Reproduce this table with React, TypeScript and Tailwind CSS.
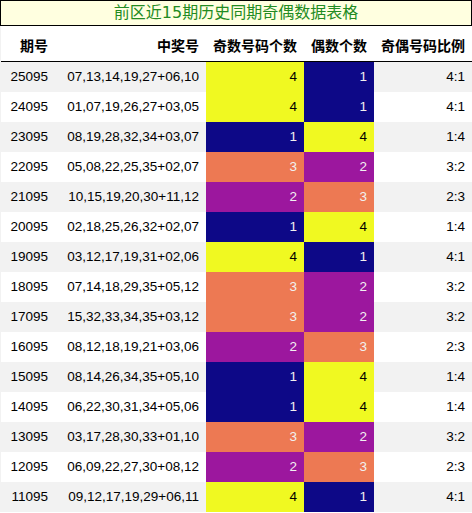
import React from "react";

type Row = [string, string, number, number, string];

const rows: Row[] = [
  ["25095", "07,13,14,19,27+06,10", 4, 1, "4:1"],
  ["24095", "01,07,19,26,27+03,05", 4, 1, "4:1"],
  ["23095", "08,19,28,32,34+03,07", 1, 4, "1:4"],
  ["22095", "05,08,22,25,35+02,07", 3, 2, "3:2"],
  ["21095", "10,15,19,20,30+11,12", 2, 3, "2:3"],
  ["20095", "02,18,25,26,32+02,07", 1, 4, "1:4"],
  ["19095", "03,12,17,19,31+02,06", 4, 1, "4:1"],
  ["18095", "07,14,18,29,35+05,12", 3, 2, "3:2"],
  ["17095", "15,32,33,34,35+03,12", 3, 2, "3:2"],
  ["16095", "08,12,18,19,21+03,06", 2, 3, "2:3"],
  ["15095", "08,14,26,34,35+05,10", 1, 4, "1:4"],
  ["14095", "06,22,30,31,34+05,06", 1, 4, "1:4"],
  ["13095", "03,17,28,30,33+01,10", 3, 2, "3:2"],
  ["12095", "06,09,22,27,30+08,12", 2, 3, "2:3"],
  ["11095", "09,12,17,19,29+06,11", 4, 1, "4:1"],
];

function colorCls(v: number): string {
  switch (v) {
    case 1:
      return "bg-[#0d0887] text-[#f1f1f1]";
    case 2:
      return "bg-[#9c179e] text-[#f1f1f1]";
    case 3:
      return "bg-[#ed7953] text-[#f1f1f1]";
    default:
      return "bg-[#f0f921] text-black";
  }
}

const grid = "grid grid-cols-[54px_151px_98px_70px_98px]";

export default function App() {
  return (
    <div className="w-[472px] h-[513px] bg-white overflow-hidden font-['Liberation_Sans','Noto_Sans_CJK_SC',sans-serif]">
      <div className="h-[26px] border border-black bg-[#ffffe0] flex items-center justify-center text-[16px] text-[#228b22] font-['DejaVu_Sans','Noto_Sans_CJK_SC',sans-serif] leading-none">
        前区近15期历史同期奇偶数据表格
      </div>
      <div className="border-l border-[#f2f2f2]">
        <div className={`${grid} h-[36px] border-b border-black items-center text-[14px] font-bold text-black font-['Noto_Sans_CJK_SC',sans-serif] pt-[3px]`}>
          <div className="text-right pr-[7px]">期号</div>
          <div className="text-right pr-[7px]">中奖号</div>
          <div className="text-right pr-[7px]">奇数号码个数</div>
          <div className="text-right pr-[7px]">偶数个数</div>
          <div className="text-right pr-[7px]">奇偶号码比例</div>
        </div>
        {rows.map((r, i) => (
          <div
            key={r[0]}
            className={`${grid} h-[30px] text-[13.5px] text-black ${i % 2 === 0 ? "bg-[#f2f2f2]" : "bg-white"}`}
          >
            <div className="flex items-center justify-end pr-[7px]">{r[0]}</div>
            <div className="flex items-center justify-end pr-[7px]">{r[1]}</div>
            <div className={`flex items-center justify-end pr-[7px] ${colorCls(r[2])}`}>{r[2]}</div>
            <div className={`flex items-center justify-end pr-[7px] ${colorCls(r[3])}`}>{r[3]}</div>
            <div className="flex items-center justify-end pr-[7px]">{r[4]}</div>
          </div>
        ))}
      </div>
    </div>
  );
}
